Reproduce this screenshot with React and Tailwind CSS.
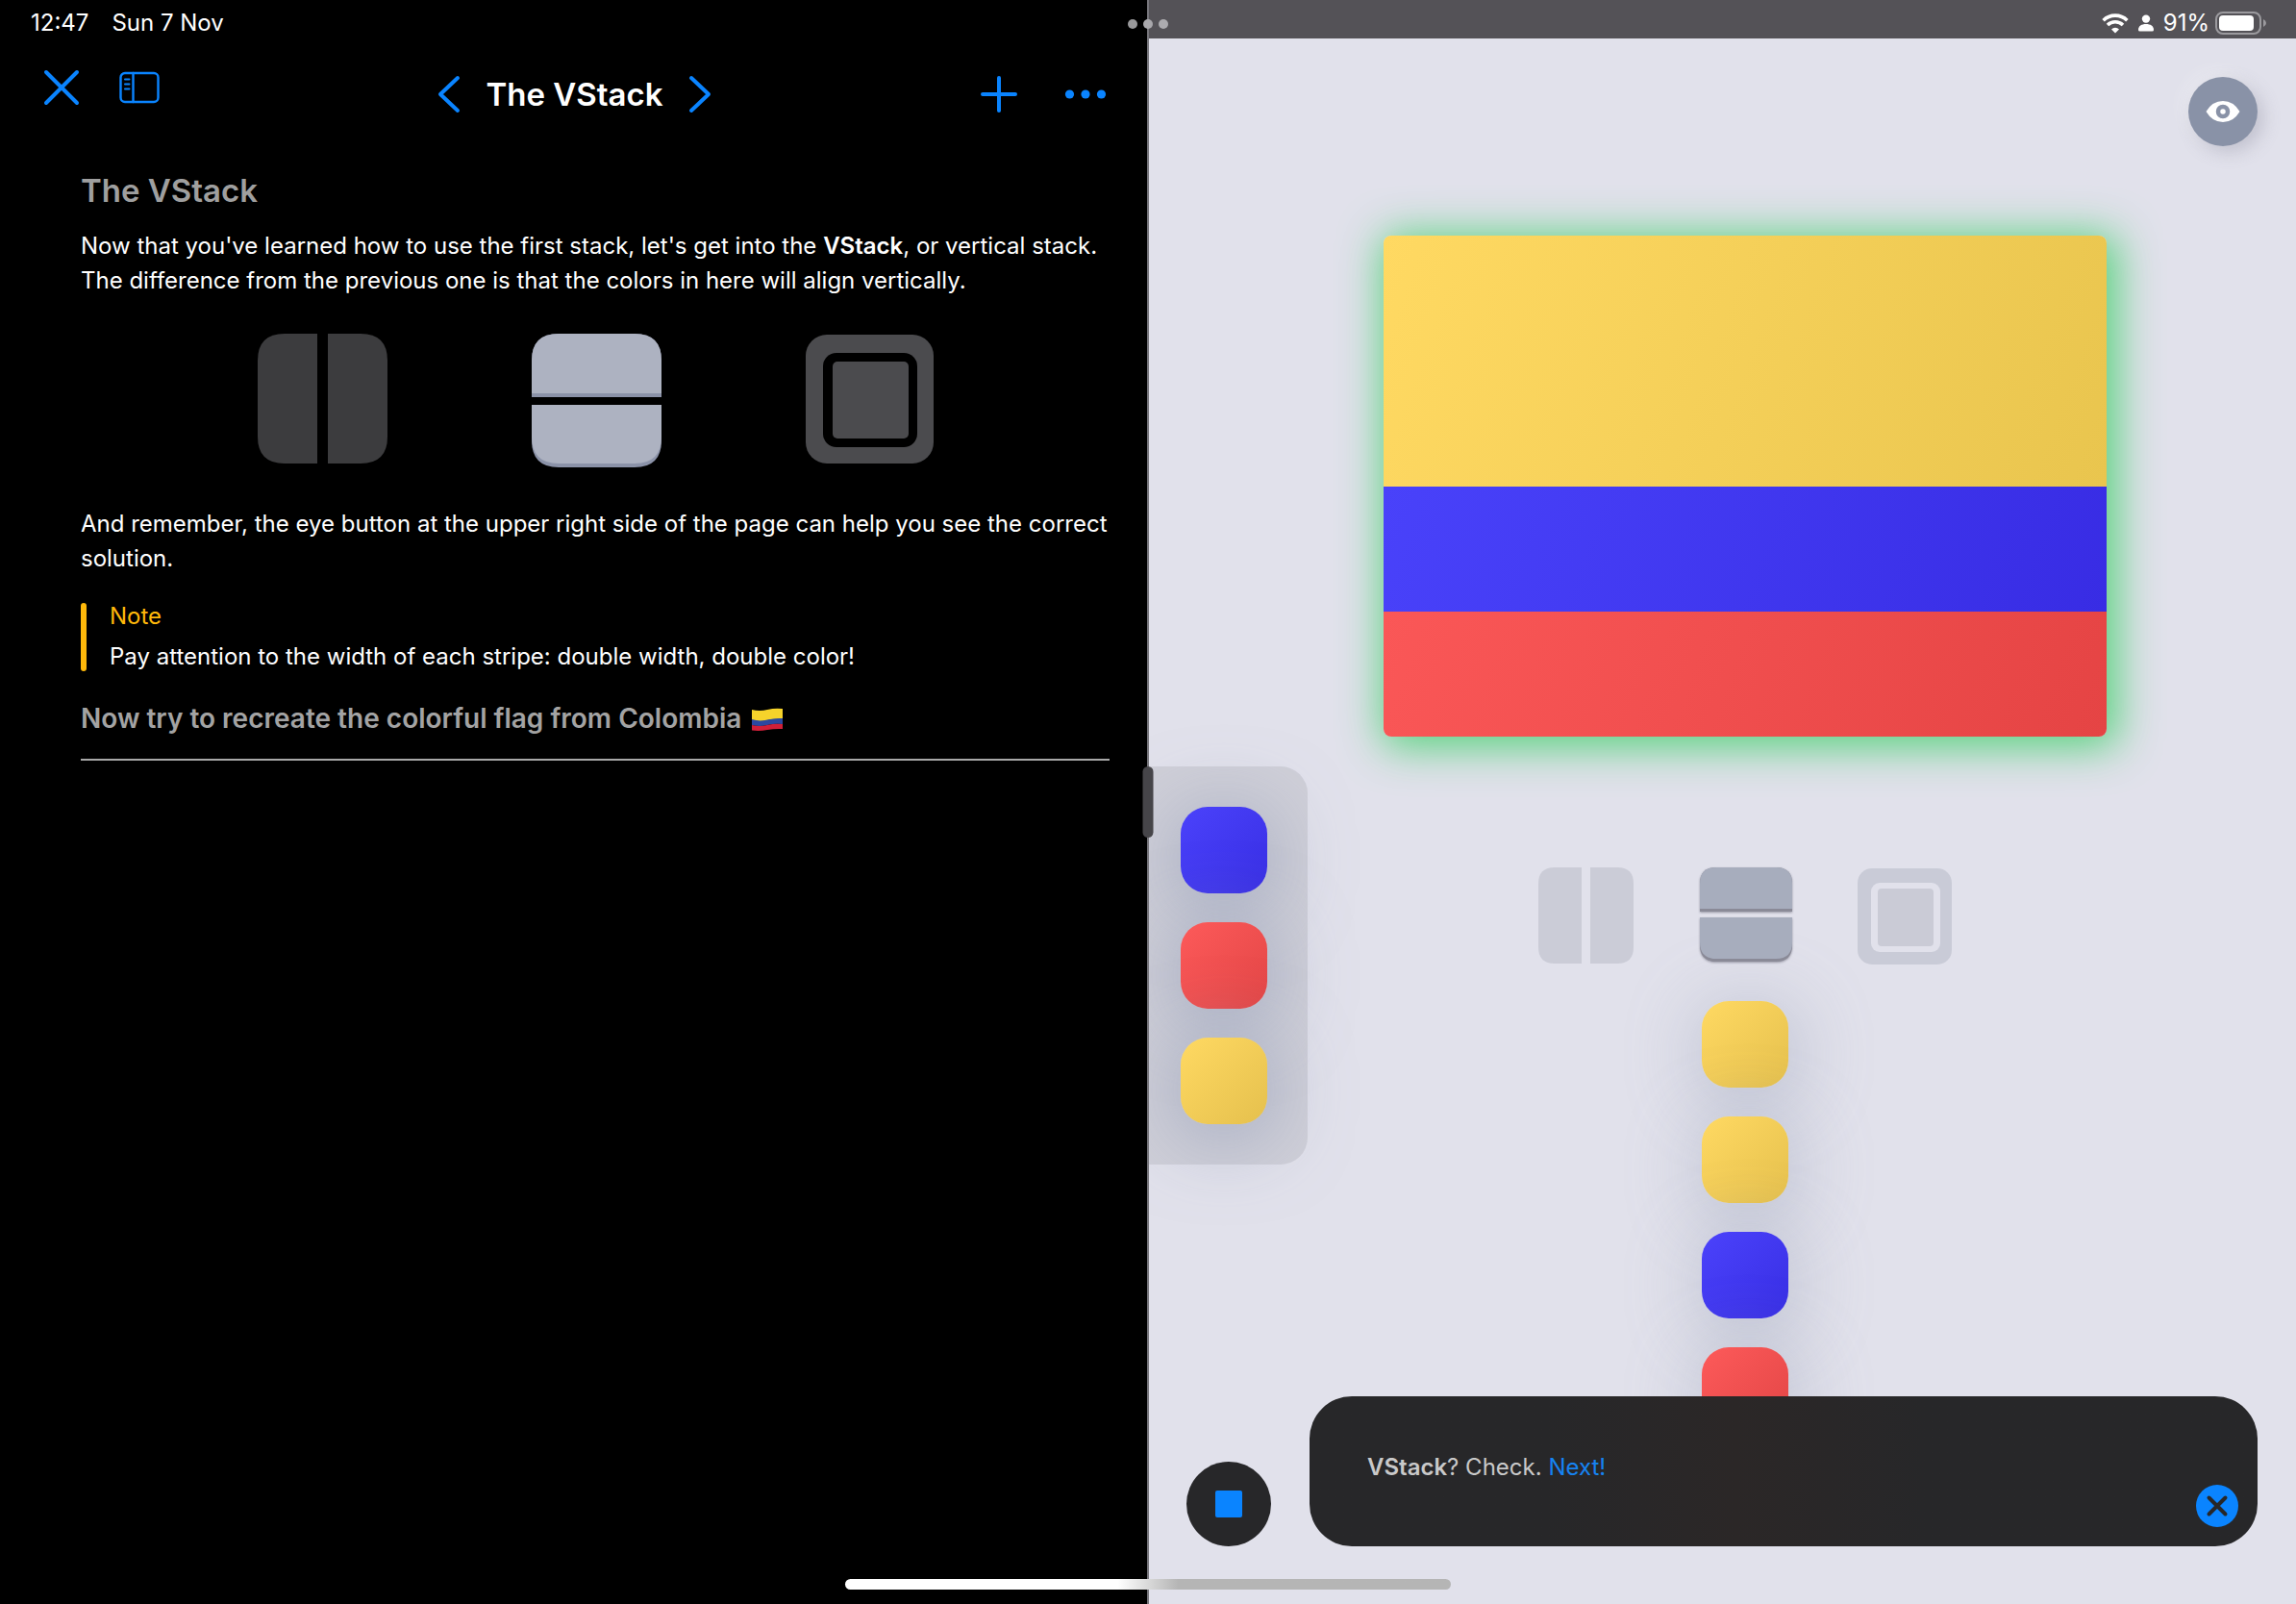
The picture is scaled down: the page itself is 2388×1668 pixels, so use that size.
import React from "react";

const swatches = {
  blue: "bg-linear-135 from-[#4b42fb] to-[#382ee4]",
  red: "bg-linear-135 from-[#fd5a5a] to-[#e24545]",
  yellow: "bg-linear-135 from-[#ffd962] to-[#e5c04d]",
};

const shadows = {
  soft: "shadow-[4px_10px_76px_6px_rgba(138,148,172,0.4)]",
  deep: "shadow-[0px_10px_76px_8px_rgba(138,150,178,0.55)]",
};

function Swatch({ color, shadow = "soft" }) {
  return (
    <button
      type="button"
      aria-label={color}
      className={`size-[90px] shrink-0 rounded-[28px] ${shadows[shadow]} ${swatches[color]}`}
    />
  );
}

function StatusIcons() {
  return (
    <div className="flex items-center text-white">
      <svg viewBox="0 0 28 21" className="h-[21px] w-7" fill="none">
        <path d="M1.6 7.2a17.8 17.8 0 0 1 24.8 0" stroke="#fff" strokeWidth="3.6" />
        <path d="M6 12a11.6 11.6 0 0 1 16 0" stroke="#fff" strokeWidth="3.6" />
        <path d="M14 20.6l-4-4.2a5.8 5.8 0 0 1 8 0z" fill="#fff" />
      </svg>
      <svg viewBox="0 0 16 18" className="ml-2.5 h-[18px] w-4" fill="#fff">
        <circle cx="8" cy="4.6" r="4.2" />
        <path d="M0 16c0-4 3.4-6 8-6s8 2 8 6q0 1.6-1.6 1.6H1.6Q0 17.600 0 16z" />
      </svg>
      <span className="ml-2.5 text-2xl leading-8">91%</span>
      <svg viewBox="0 0 54 24" className="ml-1.5 h-6 w-[54px]">
        <rect x="1" y="1" width="46" height="22" rx="7" fill="none" stroke="#9b9a9e" strokeWidth="2" />
        <rect x="4" y="4" width="36" height="16" rx="4" fill="#fff" />
        <path d="M50 8q3 1.500 3 4t-3 4z" fill="#9b9a9e" />
      </svg>
    </div>
  );
}

function ColombiaFlag() {
  return (
    <svg viewBox="0 0 32 24" role="img" aria-label="Flag of Colombia" className="ml-1 inline-block h-6 w-8 align-[-3px]">
      <path d="M0 2Q8 4 16 2T32 1V12Q24 11 16 13T0 13z" fill="#f6d32b" />
      <path d="M0 12Q8 14.500 16 12.500T32 11V17Q24 16 16 18T0 18z" fill="#2b48a0" />
      <path d="M0 18Q8 20 16 18T32 17V22Q24 21.500 16 23T0 23.500z" fill="#d01f38" />
    </svg>
  );
}

function LessonPane() {
  return (
    <section className="flex flex-1 flex-col bg-black text-white">
      <div className="flex h-10 items-end gap-6 pl-8 text-2xl leading-8">
        <span>12:47</span>
        <span>Sun 7 Nov</span>
      </div>
      <header className="grid grid-cols-[1fr_auto_1fr] items-center pt-[31px] pr-[42px] pl-11 text-[#0a84ff]">
        <div className="flex items-center gap-10 pb-3.5">
          <button type="button" aria-label="Close">
            <svg viewBox="0 0 40 40" className="size-10" stroke="currentColor" strokeWidth="4" strokeLinecap="round">
              <path d="M4 4L36 36M36 4L4 36" />
            </svg>
          </button>
          <button type="button" aria-label="Sidebar">
            <svg viewBox="0 0 42 34" className="h-[34px] w-[42px]" fill="none" stroke="currentColor" strokeWidth="2.400" strokeLinecap="round">
              <rect x="1.500" y="2" width="39" height="30" rx="4.500" />
              <path d="M14.500 2V32" />
              <path d="M6 8.500H10.500M6 13.500H10.500M6 18.500H10.500" strokeWidth="2" />
            </svg>
          </button>
        </div>
        <div className="flex items-center gap-[26px]">
          <button type="button" aria-label="Previous page">
            <svg viewBox="0 0 24 40" className="h-10 w-6" fill="none" stroke="currentColor" strokeWidth="4" strokeLinecap="round" strokeLinejoin="round">
              <path d="M21 3L3 20L21 37" />
            </svg>
          </button>
          <h1 className="text-[33px] leading-[52px] font-semibold text-white">The VStack</h1>
          <button type="button" aria-label="Next page">
            <svg viewBox="0 0 24 40" className="h-10 w-6" fill="none" stroke="currentColor" strokeWidth="4" strokeLinecap="round" strokeLinejoin="round">
              <path d="M3 3L21 20L3 37" />
            </svg>
          </button>
        </div>
        <div className="flex items-center justify-end gap-12">
          <button type="button" aria-label="Add">
            <svg viewBox="0 0 40 40" className="size-10" stroke="currentColor" strokeWidth="4" strokeLinecap="round">
              <path d="M20 3V37M3 20H37" />
            </svg>
          </button>
          <button type="button" aria-label="More">
            <svg viewBox="0 0 44 10" className="h-2.5 w-11" fill="currentColor">
              <circle cx="5.500" cy="5" r="4.600" />
              <circle cx="22" cy="5" r="4.600" />
              <circle cx="38.500" cy="5" r="4.600" />
            </svg>
          </button>
        </div>
      </header>

      <article className="pt-[50px] pr-[39px] pl-[84px] text-2xl leading-9">
        <h2 className="text-[33px] leading-[46px] font-semibold text-[#9f9f9f]">The VStack</h2>
        <p className="mt-[17px]">
          Now that you've learned how to use the first stack, let's get into the{" "}
          <strong className="font-semibold">VStack</strong>, or vertical stack.
          <br />
          The difference from the previous one is that the colors in here will align vertically.
        </p>
        <div className="mt-[37px] flex gap-[149px] pl-[184px]">
          <svg viewBox="0 0 136 140" className="h-[140px] w-[136px]" role="img" aria-label="HStack">
            <path d="M62 0H28Q0 0 0 28V107Q0 135 28 135H62z" fill="#3c3c3e" />
            <path d="M73 0H107Q135 0 135 28V107Q135 135 107 135H73z" fill="#3c3c3e" />
          </svg>
          <svg viewBox="0 0 136 140" className="h-[140px] w-[136px]" role="img" aria-label="VStack">
            <path d="M0 66V28Q0 0 28 0H107Q135 0 135 28V66z" fill="#8b92a8" />
            <path d="M0 62V28Q0 0 28 0H107Q135 0 135 28V62z" fill="#adb2c1" />
            <path d="M0 74H135V111Q135 139 107 139H28Q0 139 0 111z" fill="#8b92a8" />
            <path d="M0 74H135V107Q135 135 107 135H28Q0 135 0 107z" fill="#adb2c1" />
          </svg>
          <svg viewBox="0 0 136 140" className="h-[140px] w-[136px]" role="img" aria-label="ZStack">
            <rect x="0" y="1" width="133" height="134" rx="22" fill="#4b4b4e" />
            <rect x="18" y="20" width="98" height="98" rx="14" fill="#000" />
            <rect x="28" y="29" width="79" height="80" rx="5" fill="#4b4b4e" />
          </svg>
        </div>
        <p className="mt-10">
          And remember, the eye button at the upper right side of the page can help you see the correct solution.
        </p>
        <aside className="mt-[28px] flex gap-6">
          <span className="w-1.5 rounded-full bg-[#ffb90a]" />
          <div className="-mt-1 -mb-[3px] flex flex-col gap-1.5">
            <p className="text-[#ffb90a]">Note</p>
            <p>Pay attention to the width of each stripe: double width, double color!</p>
          </div>
        </aside>
        <h3 className="mt-[29px] border-b-2 border-[#a8a8a8] pb-[22px] text-[28px] leading-10 font-semibold text-[#a3a3a3]">
          Now try to recreate the colorful flag from Colombia <ColombiaFlag />
        </h3>
      </article>
    </section>
  );
}

function StackPicker() {
  return (
    <div className="mt-[135px] flex justify-center gap-[67px]">
      <button type="button" aria-label="HStack">
        <svg viewBox="0 0 100 104" className="h-[104px] w-[100px]">
          <path d="M45 1H17Q0 1 0 18V84Q0 101 17 101H45z" fill="#cbccd7" />
          <path d="M54 1H82Q99 1 99 18V84Q99 101 82 101H54z" fill="#cbccd7" />
        </svg>
      </button>
      <button type="button" aria-label="VStack">
        <svg viewBox="0 0 98 104" className="h-[104px] w-[98px] drop-shadow-[0_1px_1px_rgba(80,80,95,0.5)]">
          <path d="M1 47V18Q1 1 18 1H80Q97 1 97 18V47z" fill="#8a8a97" />
          <path d="M1 44V18Q1 1 18 1H80Q97 1 97 18V44z" fill="#a7adbd" />
          <path d="M1 53H97V82Q97 99 80 99H18Q1 99 1 82z" fill="#8a8a97" />
          <path d="M1 53H97V79Q97 96 80 96H18Q1 96 1 79z" fill="#a7adbd" />
        </svg>
      </button>
      <button type="button" aria-label="ZStack">
        <svg viewBox="0 0 98 104" className="h-[104px] w-[98px]">
          <rect x="0" y="2" width="98" height="100" rx="15" fill="#c9cbd7" />
          <rect x="14" y="17" width="72" height="72" rx="9" fill="#e1e1eb" />
          <rect x="21" y="23" width="58" height="60" rx="4" fill="#cacbd6" />
        </svg>
      </button>
    </div>
  );
}

function LivePane() {
  return (
    <section className="grid flex-1 grid-rows-[40px_1fr] overflow-hidden bg-[#e1e1eb]">
      <div className="flex items-end justify-end bg-[#545257] pr-[30px]">
        <StatusIcons />
      </div>
      <div className="grid grid-cols-1 grid-rows-1 *:col-start-1 *:row-start-1">
        <div className="pt-[205px] pr-[197px] pl-[244px]">
          <div className="overflow-hidden rounded-lg shadow-[5px_5px_44px_6px_rgba(64,208,106,0.85)]">
            <div className="h-[261px] bg-linear-110 from-[#ffd962] to-[#e9c54e]" />
            <div className="h-[130px] bg-linear-110 from-[#4942fa] to-[#382ce4]" />
            <div className="h-[130px] bg-linear-110 from-[#fa5757] to-[#e54444]" />
          </div>
          <StackPicker />
          <div className="mt-9 flex flex-col items-center gap-[30px]">
            <Swatch color="yellow" />
            <Swatch color="yellow" />
            <Swatch color="blue" />
            <Swatch color="red" />
          </div>
        </div>
        <div className="mt-[757px] flex flex-col gap-[30px] self-start justify-self-start rounded-r-[28px] bg-[#cfcfd8] pt-[42px] pr-[42px] pb-[42px] pl-[33px]">
          <Swatch color="blue" shadow="deep" />
          <Swatch color="red" shadow="deep" />
          <Swatch color="yellow" shadow="deep" />
        </div>
        <button
          type="button"
          aria-label="Show solution"
          className="mt-10 mr-10 flex size-[72px] items-center justify-center self-start justify-self-end rounded-full bg-[#8992a7] shadow-[6px_6px_18px_rgba(120,120,140,0.3),-6px_-6px_18px_rgba(255,255,255,0.3)]"
        >
          <svg viewBox="0 0 36 22" className="h-[22px] w-9">
            <path d="M.5 11Q7 0 18 0T35.500 11Q29 22 18 22T.5 11z" fill="#fff" />
            <circle cx="18" cy="11" r="5" fill="none" stroke="#8992a7" strokeWidth="4.500" />
          </svg>
        </button>
        <div className="z-10 flex items-end gap-10 self-end pr-10 pb-[60px] pl-[39px]">
          <button
            type="button"
            aria-label="Stop"
            className="flex size-[88px] shrink-0 items-center justify-center rounded-full bg-[#272729]"
          >
            <span className="size-7 rounded-xs bg-[#0a84ff]" />
          </button>
          <div className="flex h-[156px] flex-1 justify-between rounded-[44px] bg-linear-to-r from-[#272729] from-25% via-[#2b2727] via-45% to-[#272729] to-65% pt-14 pr-5 pb-5 pl-[60px]">
            <p className="text-2xl leading-9 text-[#c9c9c9]">
              <strong className="font-semibold">VStack</strong>? Check.{" "}
              <a href="#next" className="text-[#1683f2]">
                Next!
              </a>
            </p>
            <button type="button" aria-label="Dismiss" className="size-11 self-end rounded-full bg-[#0a84ff]">
              <svg viewBox="0 0 44 44" className="size-11" stroke="#272729" strokeWidth="4" strokeLinecap="round">
                <path d="M13.500 13.500L30.500 30.500M30.500 13.500L13.500 30.500" />
              </svg>
            </button>
          </div>
        </div>
      </div>
    </section>
  );
}

export default function App() {
  return (
    <main className="relative flex min-h-screen font-[Inter,'Noto_Sans',sans-serif]">
      <LessonPane />
      <div className="w-0.5 bg-[#77767c]" />
      <LivePane />
      <div className="absolute top-5 left-1/2 z-20 flex -translate-x-1/2 gap-1.5">
        <span className="size-2.5 rounded-full bg-[#99999b]" />
        <span className="size-2.5 rounded-full bg-[#a9a8ac]" />
        <span className="size-2.5 rounded-full bg-[#acabaf]" />
      </div>
      <div className="absolute top-[797px] left-1/2 z-20 h-[74px] w-[11px] -translate-x-1/2 rounded-full bg-[#464549]" />
      <div className="absolute bottom-[15px] left-1/2 z-20 h-[11px] w-[630px] -translate-x-1/2 rounded-full bg-linear-to-r from-white from-45% to-[#b5b5b5] to-55%" />
    </main>
  );
}
